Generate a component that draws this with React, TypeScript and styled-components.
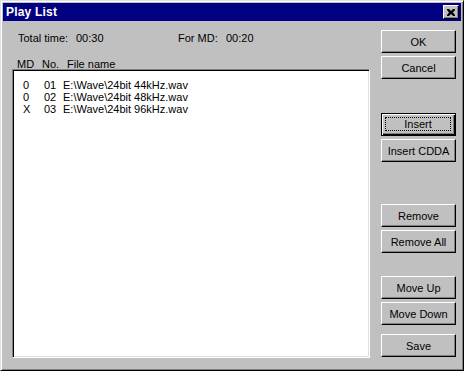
import styled, { createGlobalStyle } from 'styled-components'

const GlobalStyle = createGlobalStyle`
  html, body {
    margin: 0;
    padding: 0;
    background: #c0c0c0;
  }
  body {
    font-family: "Liberation Sans", Arial, sans-serif;
    font-size: 11px;
    color: #000;
  }
`

const Window = styled.div`
  box-sizing: border-box;
  width: 464px;
  height: 371px;
  display: flex;
  flex-direction: column;
  background: #c0c0c0;
  border-style: solid;
  border-width: 1px;
  border-color: #dfdfdf #000 #000 #dfdfdf;
  box-shadow: inset 1px 1px 0 #fff, inset -1px -1px 0 #808080;
  padding: 2px;
`

const TitleBar = styled.div`
  height: 18px;
  display: flex;
  align-items: center;
  justify-content: space-between;
  background: #000080;
  padding: 0 2px 0 3px;
`

const Title = styled.span`
  color: #fff;
  font-weight: bold;
  font-size: 12px;
  letter-spacing: 0.2px;
`

const CloseButton = styled.div`
  box-sizing: border-box;
  width: 16px;
  height: 14px;
  display: flex;
  align-items: center;
  justify-content: center;
  background: #c0c0c0;
  border-style: solid;
  border-width: 1px;
  border-color: #fff #000 #000 #fff;
  box-shadow: inset -1px -1px 0 #808080;
`

const Body = styled.div`
  flex: 1;
  display: flex;
  padding: 9px 5px 10px 9px;
  gap: 11px;
`

const LeftColumn = styled.div`
  flex: 1;
  display: flex;
  flex-direction: column;
`

const InfoRow = styled.div`
  display: flex;
  height: 14px;
  align-items: center;
  margin-top: 1px;
`

const InfoLabel = styled.span<{ $width: number; $indent?: number }>`
  width: ${p => p.$width}px;
  margin-left: ${p => p.$indent ?? 0}px;
`

const Header = styled.div`
  display: flex;
  margin-top: 13px;
  height: 11px;
  align-items: center;
`

const Cell = styled.span<{ $width: number; $indent?: number }>`
  display: inline-block;
  width: ${p => p.$width}px;
  padding-left: ${p => p.$indent ?? 0}px;
  box-sizing: border-box;
  white-space: pre;
`

const ListBox = styled.div`
  flex: 1;
  background: #fff;
  border-style: solid;
  border-width: 1px;
  border-color: #808080 #fff #fff #808080;
  box-shadow: inset 1px 1px 0 #000, inset -1px -1px 0 #dfdfdf;
  padding: 9px 0 0 2px;
`

const Row = styled.div`
  display: flex;
  height: 12px;
  align-items: center;
`

const RightColumn = styled.div`
  width: 75px;
  display: flex;
  flex-direction: column;
`

const Button = styled.div<{ $gap?: number; $default?: boolean }>`
  box-sizing: border-box;
  height: 23px;
  margin-top: ${p => p.$gap ?? 0}px;
  display: flex;
  align-items: center;
  justify-content: center;
  background: #c0c0c0;
  border-style: solid;
  border-width: 1px;
  border-color: ${p => (p.$default ? '#000' : '#fff #000 #000 #fff')};
  box-shadow: ${p =>
    p.$default
      ? 'inset 1px 1px 0 #fff, inset -1px -1px 0 #000, inset -2px -2px 0 #808080'
      : 'inset -1px -1px 0 #808080'};
  padding: ${p => (p.$default ? '3px' : '0')};
`

const Focus = styled.span`
  flex: 1;
  align-self: stretch;
  display: flex;
  align-items: center;
  justify-content: center;
  border: 1px dotted #000;
  margin: 0 1px 1px 0;
`

const rows = [
  { md: '0', no: '01', file: 'E:\\Wave\\24bit 44kHz.wav' },
  { md: '0', no: '02', file: 'E:\\Wave\\24bit 48kHz.wav' },
  { md: 'X', no: '03', file: 'E:\\Wave\\24bit 96kHz.wav' },
]

export default function App() {
  return (
    <>
      <GlobalStyle />
      <Window>
        <TitleBar>
          <Title>Play List</Title>
          <CloseButton>
            <svg width="8" height="7" viewBox="0 0 8 7">
              <path d="M0 0h2l2 2 2-2h2v1L6 3.5 8 6v1H6L4 5 2 7H0V6l2-2.5L0 1z" fill="#000" />
            </svg>
          </CloseButton>
        </TitleBar>
        <Body>
          <LeftColumn>
            <InfoRow>
              <InfoLabel $width={58} $indent={6}>Total time:</InfoLabel>
              <InfoLabel $width={102}>00:30</InfoLabel>
              <InfoLabel $width={48}>For MD:</InfoLabel>
              <InfoLabel $width={60}>00:20</InfoLabel>
            </InfoRow>
            <Header>
              <Cell $width={30} $indent={5}>MD</Cell>
              <Cell $width={25}>No.</Cell>
              <Cell $width={120}>File name</Cell>
            </Header>
            <ListBox>
              {rows.map(r => (
                <Row key={r.no}>
                  <Cell $width={19} $indent={8}>{r.md}</Cell>
                  <Cell $width={21} $indent={10}>{r.no}</Cell>
                  <Cell $width={200} $indent={8}>{r.file}</Cell>
                </Row>
              ))}
            </ListBox>
          </LeftColumn>
          <RightColumn>
            <Button>OK</Button>
            <Button $gap={3}>Cancel</Button>
            <Button $gap={34} $default>
              <Focus>Insert</Focus>
            </Button>
            <Button $gap={3}>Insert CDDA</Button>
            <Button $gap={42}>Remove</Button>
            <Button $gap={3}>Remove All</Button>
            <Button $gap={23}>Move Up</Button>
            <Button $gap={3}>Move Down</Button>
            <Button $gap={9}>Save</Button>
          </RightColumn>
        </Body>
      </Window>
    </>
  )
}
